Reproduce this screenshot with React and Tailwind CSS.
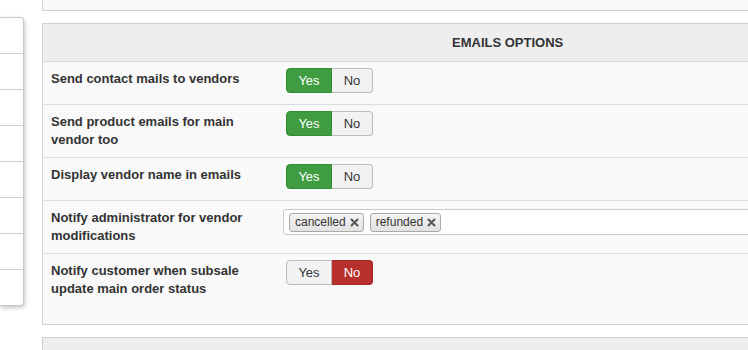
import React from 'react';

function Toggle({ value }) {
  const yesOn = value === 'yes';
  return (
    <div className="flex ml-[3px] h-[25px] text-[13px] leading-none">
      <div
        className={
          yesOn
            ? 'w-[46px] flex items-center justify-center rounded-l-[4px] border border-[#358a35] bg-[#3f9c40] text-white'
            : 'w-[46px] flex items-center justify-center rounded-l-[4px] border border-[#bbbbbb] bg-[#f2f2f2] text-[#333]'
        }
      >
        Yes
      </div>
      <div
        className={
          yesOn
            ? 'w-[41px] flex items-center justify-center rounded-r-[4px] border border-l-0 border-[#bbbbbb] bg-[#f2f2f2] text-[#333]'
            : 'w-[41px] flex items-center justify-center rounded-r-[4px] border border-l-0 border-[#a12a25] bg-[#b8302b] text-white'
        }
      >
        No
      </div>
    </div>
  );
}

function Chip({ label }) {
  return (
    <div className="flex items-center h-[19px] pl-[5px] pr-[4px] gap-[4px] rounded-[3px] border border-[#aaaaaa] bg-gradient-to-b from-[#f4f4f4] to-[#e2e2e2] text-[12px] text-[#333]">
      <span>{label}</span>
      <svg width="9" height="9" viewBox="0 0 9 9">
        <path d="M1.5 1.5 L7.5 7.5 M7.5 1.5 L1.5 7.5" stroke="#555" strokeWidth="2" strokeLinecap="round" />
      </svg>
    </div>
  );
}

const rows = [
  { label: ['Send contact mails to vendors'], h: 'h-[43px]', ctrl: <Toggle value="yes" /> },
  { label: ['Send product emails for main', 'vendor too'], h: 'h-[53px]', ctrl: <Toggle value="yes" /> },
  { label: ['Display vendor name in emails'], h: 'h-[43px]', ctrl: <Toggle value="yes" /> },
  {
    label: ['Notify administrator for vendor', 'modifications'],
    h: 'h-[53px]',
    ctrl: (
      <div className="mt-[2px] h-[26px] w-[600px] flex items-center gap-[6px] pl-[5px] bg-white border border-[#c8c8c8] rounded-l-[3px]">
        <Chip label="cancelled" />
        <Chip label="refunded" />
      </div>
    ),
  },
  { label: ['Notify customer when subsale', 'update main order status'], h: 'h-[70px]', ctrl: <Toggle value="no" />, last: true },
];

export default function App() {
  return (
    <div className="w-[748px] h-[350px] overflow-hidden bg-white flex items-start font-['Liberation_Sans',Arial,sans-serif] text-[#333]">
      {/* left menu */}
      <div className="shrink-0 w-6 mt-[17px] h-[289px] bg-white border border-l-0 border-[#c8c8c8] rounded-r-[4px] shadow-[1px_2px_4px_rgba(0,0,0,0.22)] flex flex-col">
        {[0, 1, 2, 3, 4, 5, 6].map(n => (
          <div key={n} className="shrink-0 h-[36px] border-b border-[#cfcfcf]" />
        ))}
        <div className="shrink-0 h-[35px]" />
      </div>

      {/* main */}
      <div className="ml-[18px] flex-1 min-w-0 flex flex-col">
        <div className="shrink-0 h-[11px] bg-[#f9f9f9] border-l border-b border-[#d0d0d0]" />

        <div className="shrink-0 mt-[12px] bg-[#f9f9f9] border-l border-y border-[#d0d0d0] flex flex-col">
          <div className="shrink-0 h-[38px] bg-[#eeeeee] border-b border-[#d8d8d8] flex items-center pl-[409px] text-[13px] font-bold">
            EMAILS OPTIONS
          </div>
          {rows.map((r, i) => (
            <div
              key={i}
              className={`${r.h} shrink-0 flex items-start ${r.last ? '' : 'border-b border-[#dcdcdc]'}`}
            >
              <div className="w-[240px] shrink-0 pl-[8px] pt-[8px] text-[13px] leading-[18px] font-bold whitespace-nowrap">
                {r.label.map((l, j) => (
                  <div key={j}>{l}</div>
                ))}
              </div>
              <div className="pt-[6px]">{r.ctrl}</div>
            </div>
          ))}
        </div>

        <div className="shrink-0 mt-[12px] h-[30px] bg-[#eeeeee] border-l border-t border-[#d0d0d0]" />
      </div>
    </div>
  );
}
